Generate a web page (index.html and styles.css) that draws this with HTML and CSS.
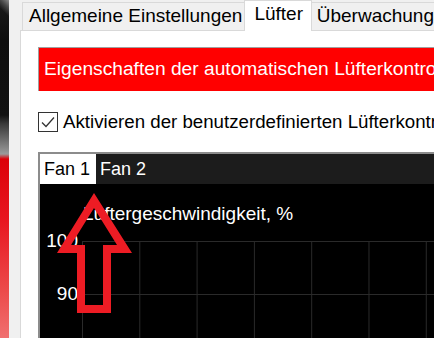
FILE: index.html
```html
<!DOCTYPE html>
<html lang="de">
<head>
  <meta charset="UTF-8" />
  <meta name="viewport" content="width=device-width, initial-scale=1.0" />
  <title>Lüfter</title>
  <link rel="stylesheet" href="styles.css">
</head>
<body>
  <div class="window">
    <div class="side-strip"></div>

    <div class="main">
      <div class="tabs">
        <div class="tab tab-general">Allgemeine Einstellungen</div>
        <div class="tab tab-fans active">Lüfter</div>
        <div class="tab tab-monitor">Überwachung</div>
      </div>

      <div class="page">
        <div class="banner">Eigenschaften der automatischen Lüfterkontrolle</div>

        <label class="check">
          <span class="box">
            <svg width="18" height="18" viewBox="0 0 18 18">
              <polyline points="3,9.5 7,13.5 15,4.5" fill="none" stroke="#333" stroke-width="1.3" />
            </svg>
          </span>
          Aktivieren der benutzerdefinierten Lüfterkontrolle
        </label>

        <div class="fan-panel">
          <div class="fan-tabs">
            <span class="fan-tab active">Fan 1</span>
            <span class="fan-tab">Fan 2</span>
          </div>
          <div class="chart">
            <div class="chart-title">Lüftergeschwindigkeit, %</div>
            <div class="plot">
              <div class="y-axis">
                <div class="y-label">100</div>
                <div class="y-label">90</div>
                <div class="y-label">80</div>
              </div>
              <div class="grid"></div>
            </div>
          </div>
        </div>
      </div>
    </div>

    <!-- red hint arrow pointing at the Fan 1 tab -->
    <svg class="arrow" width="434" height="338" viewBox="0 0 434 338">
      <path fill="#ed1c24" fill-rule="evenodd"
        d="M94 193 L132 253 L111 253 L111 313 L77 313 L77 253 L57 253 Z
           M94 208 L71 245 L85 245 L85 305 L103 305 L103 245 L117 245 Z" />
    </svg>
  </div>
</body>
</html>
```

FILE: styles.css
```css
html, body {
  margin: 0;
  padding: 0;
}

body {
  font-family: "Liberation Sans", Arial, sans-serif;
  background: #f0f0f0;
  color: #000;
  overflow: hidden;
}

.window {
  position: relative;
  display: flex;
  width: 434px;
  height: 338px;
  overflow: hidden;
}

.side-strip {
  flex: 0 0 9px;
  background:
    linear-gradient(225deg, #8a8a8a 0, #4a4a4a 6px, transparent 12px),
    linear-gradient(to bottom, #1c1c1c 0, #0e0e0e 40px, #111 115px, #3a3a3a 124px, #9a9a9a 154px, #dc0008 159px, #e81620 220px, #ec4a4a 290px, #f07070 338px);
}

.main {
  flex: 1;
  display: flex;
  flex-direction: column;
  margin-left: 11px;
  min-width: 0;
}

/* tab header */
.tabs {
  display: flex;
  align-items: flex-end;
  height: 30px;
  padding-left: 2px;
  white-space: nowrap;
}

.tab {
  box-sizing: border-box;
  height: 28px;
  padding: 0 0 0 6px;
  border: 1px solid #d9d9d9;
  border-bottom: none;
  background: #f0f0f0;
  font-size: 19px;
  line-height: 26px;
  margin-right: -1px;
}

.tab-general { width: 226px; }
.tab-fans { width: 68px; padding-left: 9px; }
.tab-monitor { flex: 1; padding-left: 5px; }

.tab.active {
  position: relative;
  z-index: 1;
  height: 31px;
  margin-bottom: -1px;
  background: #fff;
  line-height: 25px;
}

/* tab page */
.page {
  flex: 1;
  background: #fff;
  border-top: 1px solid #d9d9d9;
  border-left: 1px solid #d9d9d9;
  padding: 16px 0 0 17px;
  white-space: nowrap;
  overflow: hidden;
}

.banner {
  height: 33px;
  padding: 10px 0 0 5px;
  border-top: 1px solid #a0a0a0;
  border-left: 1px solid #a0a0a0;
  background: #ff0000;
  color: #fff;
  font-size: 19.2px;
  line-height: 22px;
}

.check {
  display: flex;
  align-items: center;
  gap: 5px;
  margin-top: 20px;
  height: 22px;
  font-size: 18.7px;
  line-height: 22px;
}

.box {
  display: flex;
  align-items: center;
  justify-content: center;
  width: 18px;
  height: 18px;
  border: 1px solid #333;
  background: #fff;
}

/* fan chart */
.fan-panel {
  margin-top: 19px;
  border-top: 2px solid #8c8c8c;
  border-left: 2px solid #8c8c8c;
  height: 200px;
  background: #000;
}

.fan-tabs {
  display: flex;
  height: 30px;
  background: #1c1c1c;
  font-size: 18px;
  line-height: 29px;
}

.fan-tab {
  padding: 1px 4px 0;
  color: #fff;
}

.fan-tab.active {
  width: 48px;
  background: #fff;
  color: #000;
}

.chart {
  color: #fff;
}

.chart-title {
  margin-top: 19px;
  padding-left: 43px;
  font-size: 19px;
  line-height: 22px;
}

.plot {
  display: flex;
  gap: 4px;
  margin-top: 5px;
}

.y-axis {
  width: 38px;
  text-align: right;
  font-size: 19px;
  line-height: 22px;
}

.y-label {
  height: 53px;
}

.grid {
  flex: 1;
  margin-top: 11px;
  height: 120px;
  background-image:
    linear-gradient(to right, #2a2a2a 1px, transparent 1px),
    linear-gradient(to bottom, #2a2a2a 1px, transparent 1px);
  background-size: 57.3px 53px;
}

.arrow {
  position: absolute;
  left: 0;
  top: 0;
  pointer-events: none;
}
```
